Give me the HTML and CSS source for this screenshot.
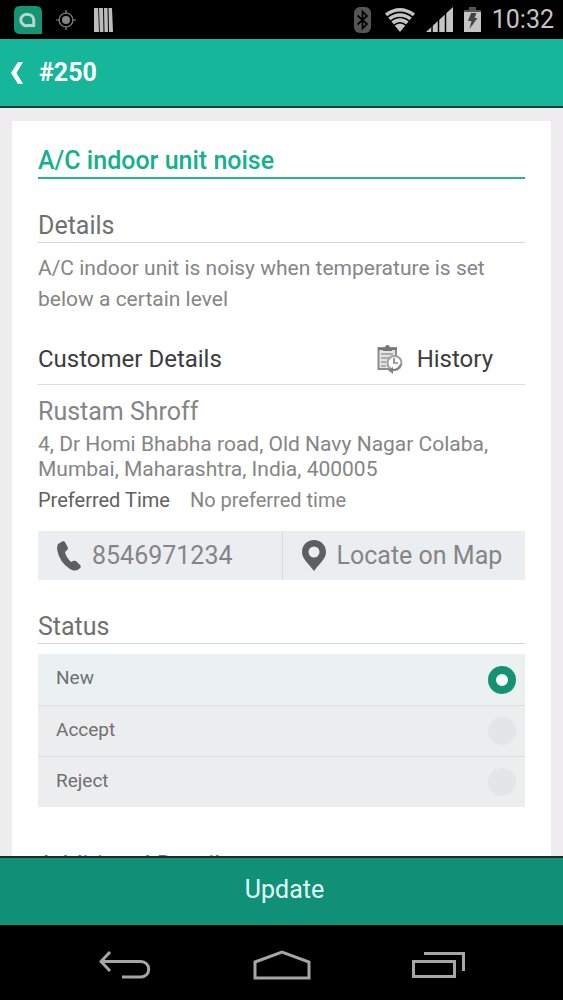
FILE: index.html
```
<!DOCTYPE html>
<html lang="en">
<head>
<meta charset="utf-8">
<meta name="viewport" content="width=device-width, initial-scale=1">
<title>#250</title>
<link rel="stylesheet" href="styles.css">
</head>
<body>
<div class="statusbar">
  <div class="status-left">
    <svg width="28" height="28" viewBox="0 0 28 28" aria-hidden="true"><path d="M6 0H22Q28 0 28 6V28H6Q0 28 0 22V6Q0 0 6 0Z" fill="#159474"/><path d="M14 8.500A5.700 5.700 0 1 0 14 19.500H19.700V14A5.700 5.700 0 0 0 14 8.500Z" fill="none" stroke="#b9d5cd" stroke-width="3"/></svg>
    <svg width="20" height="20" viewBox="0 0 20 20" aria-hidden="true"><circle cx="10" cy="10" r="7" fill="none" stroke="#858585" stroke-width="1.200"/><circle cx="10" cy="10" r="4" fill="#858585"/><path d="M10 0V4M10 16V20M0 10H4M16 10H20" stroke="#858585" stroke-width="1.200"/></svg>
    <svg width="19" height="24" viewBox="0 0 19 24" aria-hidden="true"><path d="M0 0H4.200L5 24H0ZM5 0H9L9.500 24H5.800ZM10 0H13.500L14 24H10.500ZM14.500 0H18L19 24H15Z" fill="#bdbdbd"/></svg>
  </div>
  <div class="status-right">
    <svg class="bluetooth" width="17" height="26" viewBox="0 0 17 26" aria-hidden="true"><rect width="17" height="26" rx="6" fill="#555"/><path d="M3.500 8.500L13 17L8.500 21.500V4.500L13 9L3.500 17.500" fill="none" stroke="#000" stroke-width="1.700"/></svg>
    <svg width="30" height="24" viewBox="0 0 30 24" aria-hidden="true"><path d="M15 24L0 5.500Q15 -5.500 30 5.500Z" fill="#c4c4c4"/><path d="M2 9.300Q15 -.5 28 9.300M5 13.500Q15 5.500 25 13.500M8.500 17.500Q15 12 21.500 17.500" fill="none" stroke="#000" stroke-width="1.600"/></svg>
    <svg width="27" height="25" viewBox="0 0 27 25" aria-hidden="true"><path d="M0 25L27 0V25Z" fill="#c4c4c4"/><path d="M6 14V25M12.500 8V25M19.500 2V25" stroke="#000" stroke-width="1.500"/></svg>
    <svg width="17" height="25" viewBox="0 0 17 25" aria-hidden="true"><path d="M5 0H12V3H17V25H0V3H5Z" fill="#555"/><path d="M0 5H17V25H0Z" fill="#c4c4c4"/><path d="M7 6H12.500L10.500 11H13.500L5.500 22L7.500 14H4Z" fill="#444"/></svg>
    <time class="clock">10:32</time>
  </div>
</div>
<header class="appbar">
  <button class="back" type="button" aria-label="Back"><svg width="12" height="22" viewBox="0 0 12 22" aria-hidden="true"><path d="M7 0H12L5.500 11L12 22H7L0 11Z" fill="#fff"/></svg></button>
  <h1 class="ticket">#250</h1>
</header>
<main class="content">
  <article class="card">
    <h2 class="title">A/C indoor unit noise</h2>
    <section class="block">
      <h3 class="heading">Details</h3>
      <p class="description">A/C indoor unit is noisy when temperature is set below a certain level</p>
    </section>
    <section class="customer">
      <div class="customer-head">
        <h3 class="customer-title">Customer Details</h3>
        <button class="history" type="button">
          <svg width="26" height="29" viewBox="0 0 26 29" aria-hidden="true"><path d="M1.500 3H19V24H1.500Z" fill="#e4e4e4" stroke="#8c8c8c" stroke-width="2"/><path d="M1 3H20V5H1Z" fill="#777"/><path d="M6 6V3H8Q8 0 10.500 0Q13 0 13 3H15V6Z" fill="#777"/><path d="M4 9H16M4 13H13M4 17H9M4 21H9" stroke="#999" stroke-width="1.500"/><circle cx="17.500" cy="18" r="7" fill="#fff" stroke="#a0a0a0" stroke-width="2"/><path d="M17 13V18H21" fill="none" stroke="#888" stroke-width="1.700"/><path d="M24.500 19Q22.500 26 16 26V29L11 25L16 22V24Q21 24 23 19Z" fill="#808080"/></svg>
          History
        </button>
      </div>
      <p class="name">Rustam Shroff</p>
      <address class="address">4, Dr Homi Bhabha road, Old Navy Nagar Colaba, Mumbai, Maharashtra, India, 400005</address>
      <dl class="preferred"><dt>Preferred Time</dt><dd>No preferred time</dd></dl>
      <div class="actions">
        <a class="action" href="tel:8546971234">
          <svg width="24" height="30" viewBox="0 0 24 30" aria-hidden="true"><path d="M1 3L6 0Q8 0 9 3L11 7Q11 9 8 11Q9 16 14 21Q17 19 19 20L23 24Q25 26 22 28Q18 31 13 28Q2 21 0 8Q0 5 1 3Z" fill="#5c6062"/></svg>
          8546971234</a>
        <a class="action" href="#map">
          <svg width="24" height="31" viewBox="0 0 24 31" aria-hidden="true"><path fill-rule="evenodd" d="M12 0C5 0 0 5 0 12C0 19 7 24 12 31C17 24 24 19 24 12C24 5 19 0 12 0ZM12 6.500A5.500 5.500 0 1 1 12 17.500A5.500 5.500 0 0 1 12 6.500Z" fill="#5c6062"/></svg>
          Locate on Map</a>
      </div>
    </section>
    <section class="block">
      <h3 class="heading">Status</h3>
      <div class="options" role="radiogroup" aria-label="Status">
        <label class="option">New<input class="radio" type="radio" name="status" checked></label>
        <label class="option">Accept<input class="radio" type="radio" name="status"></label>
        <label class="option">Reject<input class="radio" type="radio" name="status"></label>
      </div>
    </section>
    <section class="more">
      <h3 class="heading">Additional Details</h3>
    </section>
  </article>
</main>
<button class="update" type="button">Update</button>
<nav class="navbar">
  <button type="button" aria-label="Back"><svg width="52" height="28" viewBox="0 0 52 28" aria-hidden="true"><path d="M11 1L2 10.500L11 20M2 10.500H42A7.500 7.500 0 0 1 42 26H23" fill="none" stroke="#a6a6a6" stroke-width="3"/></svg></button>
  <button type="button" aria-label="Home"><svg width="58" height="30" viewBox="0 0 58 30" aria-hidden="true"><path d="M2 12L29 2L56 12V28H2Z" fill="none" stroke="#a6a6a6" stroke-width="3"/></svg></button>
  <button type="button" aria-label="Recent apps"><svg width="54" height="28" viewBox="0 0 54 28" aria-hidden="true"><path d="M1.500 10.500H42.500V25.500H1.500ZM12 2.500H51.500V20" fill="none" stroke="#a6a6a6" stroke-width="3"/></svg></button>
</nav>
</body>
</html>
```
FILE: styles.css
```
* { box-sizing: border-box; }
body {
  margin: 0;
  height: 100vh;
  display: flex;
  flex-direction: column;
  background: #000;
  color: #858585;
  font-family: Roboto, "Noto Sans", sans-serif;
  font-size: 20px;
}
h1, h2, h3, p, dl, dd { margin: 0; font-weight: 400; }
button { margin: 0; padding: 0; border: 0; background: none; color: inherit; font: inherit; }
svg { display: block; flex: none; }

.statusbar {
  flex: none;
  height: 39px;
  padding: 0 9px 0 14px;
  display: flex;
  align-items: center;
  justify-content: space-between;
}
.status-left, .status-right { display: flex; align-items: center; }
.status-left { gap: 14px; }
.status-left svg:last-child { margin-left: 4px; }
.status-right { gap: 11px; }
.bluetooth { margin-right: 3px; }
.clock { color: #c4c4c4; font-size: 25px; line-height: 40px; }

.appbar {
  flex: none;
  height: 69px;
  padding: 0 11px;
  display: flex;
  align-items: center;
  gap: 16px;
  background: #16b69a;
  border-bottom: 2px solid #173c33;
  color: #fff;
}
.ticket { font-size: 25px; line-height: 33px; font-weight: 700; }

.content {
  flex: 1;
  min-height: 0;
  overflow: hidden;
  padding: 13px 12px 0;
  background: #eeecee;
}
.card { padding: 23px 26px; background: #fff; }
.title {
  border-bottom: 2px solid #27b295;
  color: #16b08c;
  font-size: 25px;
  line-height: 33px;
  font-weight: 500;
}
.block { padding-top: 30px; }
.heading {
  border-bottom: 1px solid #d6d6d6;
  color: #707070;
  font-size: 25px;
  line-height: 33px;
}
.description { padding-top: 10px; font-size: 21px; line-height: 31px; }

.customer { padding-top: 24px; }
.customer-head {
  display: flex;
  align-items: center;
  justify-content: space-between;
  padding: 4px 32px 8px 0;
  border-bottom: 1px solid #dcdcdc;
  color: #3c3c3c;
  font-size: 24px;
  line-height: 33px;
}
.customer-title { font-size: 24px; }
.history { display: flex; align-items: center; gap: 14px; }
.name { padding-top: 10px; font-size: 25px; line-height: 33px; }
.address { padding-top: 4px; font-size: 21px; font-style: normal; line-height: 25px; }
.preferred { display: flex; gap: 20px; padding-top: 6px; line-height: 25px; }
.preferred dt { color: #606060; }
.actions {
  display: grid;
  grid-template-columns: 1fr 1fr;
  margin-top: 18px;
  background: #ebeef0;
}
.action {
  display: flex;
  align-items: center;
  gap: 11px;
  padding: 0 12px 0 19px;
  color: #858585;
  font-size: 25px;
  line-height: 49px;
  text-decoration: none;
}
.action + .action { border-left: 1px solid #d8dbdd; }

.options { margin-top: 10px; background: #ecedef; }
.option {
  display: flex;
  align-items: center;
  justify-content: space-between;
  height: 51px;
  padding: 0 9px 4px 18px;
  color: #707070;
  font-size: 19px;
}
.option + .option { border-top: 1px solid #dcdee2; }
.option:first-child { background: #ebf0f1; }
.radio {
  appearance: none;
  width: 28px;
  height: 28px;
  margin: 4px 0 0;
  border-radius: 50%;
  background: #e3e5e8;
}
.radio:checked { border: 8px solid #139371; background: #fff; }
.more { padding-top: 42px; }

.update {
  flex: none;
  height: 69px;
  padding: 0 0 4px 6px;
  border-top: 2px solid #202a28;
  background: #109076;
  color: #e0fff8;
  font-size: 25px;
}
.navbar {
  flex: none;
  height: 75px;
  padding: 4px 97px 0 99px;
  display: flex;
  align-items: center;
  justify-content: space-between;
}
```
